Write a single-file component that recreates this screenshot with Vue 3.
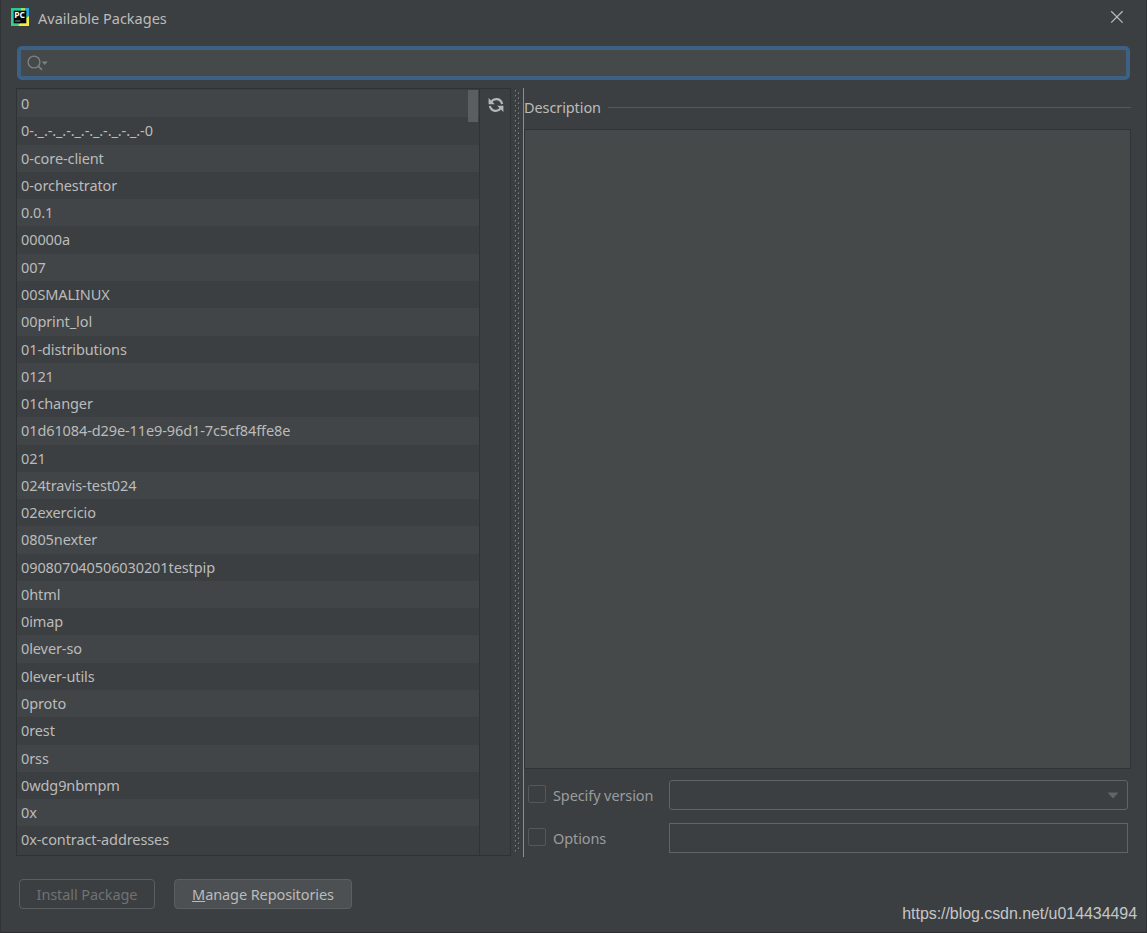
<template>
  <div class="dialog">
    <header class="title-bar">
      <svg class="app-icon" width="18" height="18" viewBox="0 0 18 18">
        <rect width="18" height="18" fill="#2bc98b" />
        <path d="M12 0h6v9l-4-3z" fill="#25a5df" />
        <path d="M10 0h4v4h-4z" fill="#a8dc5a" />
        <path d="M18 8v10H6l7-6z" fill="#f3ea43" />
        <path d="M0 9l8 9H0z" fill="#31d18c" />
        <rect x="2.7" y="2.7" width="12.6" height="12.6" fill="#05080a" />
        <text x="3.2" y="9.7" class="app-icon-text">PC</text>
        <rect x="4.2" y="12.5" width="5" height="1" fill="#898d8e" />
      </svg>
      <span class="title">Available Packages</span>
      <button class="close" title="Close">
        <svg width="14" height="14" viewBox="0 0 14 14">
          <path d="M1.2 1.2l11.4 11.4M12.6 1.2L1.2 12.6" stroke="#b9bcbe" stroke-width="1.25" fill="none" />
        </svg>
      </button>
    </header>

    <div class="search">
      <svg width="22" height="18" viewBox="0 0 22 18">
        <circle cx="7" cy="8" r="5.9" fill="none" stroke="#7d8184" stroke-width="1.4" />
        <path d="M11 12l4 3.8" stroke="#7d8184" stroke-width="1.7" />
        <path d="M14.7 7.4h6l-3 3.5z" fill="#7d8184" />
      </svg>
      <input v-model="query" type="text">
    </div>

    <main class="content">
      <section class="packages">
        <div class="list">
          <div
            v-for="(name, i) in filtered"
            :key="name"
            class="row"
            :class="{ striped: i % 2 === 0 }"
          >{{ name }}</div>
          <div class="scroll-thumb"></div>
        </div>
        <div class="side-tools">
          <svg width="16" height="16" viewBox="0 0 16 16">
            <g fill="none" stroke="#b4b8ba" stroke-width="2.2">
              <path d="M3.4 4.6C6 .9 12.6 1 14.2 7" />
              <path d="M12.6 11.4C10 15.1 3.4 15 1.8 9" />
            </g>
            <path d="M.6 1v6.2h6.2zM15.4 15V8.8H9.200z" fill="#b4b8ba" />
          </svg>
        </div>
      </section>

      <svg class="splitter" width="8" height="767">
        <defs>
          <pattern id="grip" width="6" height="5" patternUnits="userSpaceOnUse">
            <rect x="0" y="0" width="1" height="1.5" fill="#808385" />
            <rect x="1" y="1" width="1" height="1" fill="#2e3032" />
            <rect x="3" y="2.5" width="1" height="1.5" fill="#808385" />
            <rect x="4" y="4" width="1" height="1" fill="#2e3032" />
          </pattern>
        </defs>
        <rect width="6" height="762" fill="url(#grip)" />
      </svg>

      <section class="details">
        <div class="section-title">
          <span>Description</span>
          <i></i>
        </div>
        <div class="description"></div>
        <div class="option">
          <span class="checkbox"></span>
          <label>Specify version</label>
          <div class="field combo">
            <svg width="12" height="7" viewBox="0 0 12 7"><path d="M.5 .5h11L6 6.5z" fill="#616567" /></svg>
          </div>
        </div>
        <div class="option">
          <span class="checkbox"></span>
          <label>Options</label>
          <div class="field"></div>
        </div>
      </section>
    </main>

    <footer class="footer">
      <button class="btn install" disabled>Install Package</button>
      <button class="btn manage"><u>M</u>anage Repositories</button>
      <span class="watermark">https://blog.csdn.net/u014434494</span>
    </footer>
  </div>
</template>

<script setup>
import { computed, ref } from 'vue'

const query = ref('')

const packages = [
  '0',
  '0-._.-._.-._.-._.-._.-._.-0',
  '0-core-client',
  '0-orchestrator',
  '0.0.1',
  '00000a',
  '007',
  '00SMALINUX',
  '00print_lol',
  '01-distributions',
  '0121',
  '01changer',
  '01d61084-d29e-11e9-96d1-7c5cf84ffe8e',
  '021',
  '024travis-test024',
  '02exercicio',
  '0805nexter',
  '090807040506030201testpip',
  '0html',
  '0imap',
  '0lever-so',
  '0lever-utils',
  '0proto',
  '0rest',
  '0rss',
  '0wdg9nbmpm',
  '0x',
  '0x-contract-addresses'
]

const filtered = computed(() => packages.filter(name => name.includes(query.value)))
</script>

<style>
body {
  margin: 0;
  overflow: hidden;
}
</style>

<style scoped>
.dialog {
  box-sizing: border-box;
  width: 1147px;
  height: 933px;
  display: flex;
  flex-direction: column;
  background: #3c3f41;
  border-left: 1px solid #313436;
  border-right: 1px solid #303335;
  border-bottom: 1px solid #2c2d2f;
  color: #bbbbbb;
  font-family: "Noto Sans", "Open Sans", sans-serif;
  font-size: 14.5px;
  letter-spacing: -0.1px;
}

.title-bar {
  height: 46px;
  display: flex;
  align-items: flex-start;
  padding-left: 10px;
}

.app-icon {
  margin-top: 8px;
}

.app-icon-text {
  font: bold 8.5px "Open Sans", sans-serif;
  letter-spacing: -0.1px;
  fill: #fff;
}

.title {
  margin-left: 9px;
  line-height: 36px;
  letter-spacing: 0;
}

.close {
  margin: 10px 22px 0 auto;
  padding: 0;
  border: 0;
  background: none;
  height: 14px;
}

.close svg {
  display: block;
}

.search {
  box-sizing: border-box;
  height: 34px;
  margin: 0 16px;
  display: flex;
  align-items: center;
  padding-left: 6px;
  background: #45494a;
  border: 4px solid #3d6185;
  border-radius: 5px;
}

.search input {
  flex: 1;
  border: 0;
  outline: 0;
  background: none;
  color: inherit;
  font: inherit;
}

.content {
  height: 769px;
  margin: 8px 15px 0;
  display: flex;
}

.packages {
  box-sizing: border-box;
  width: 495px;
  height: 768px;
  display: flex;
  border: 1px solid #2f3234;
}

.list {
  position: relative;
  width: 462px;
  padding-top: 1.16px;
  overflow: hidden;
  border-right: 1px solid #303335;
}

.row {
  height: 27.28px;
  line-height: 27px;
  padding-left: 4px;
  white-space: pre;
}

.row.striped {
  background: #414547;
}

.scroll-thumb {
  position: absolute;
  top: 1px;
  right: 1px;
  width: 10px;
  height: 32px;
  background: #5b5e60;
}

.side-tools {
  flex: 1;
  display: flex;
  justify-content: center;
  padding: 8px 0 0 2px;
}

.splitter {
  margin: 2px 0 0 4px;
}

.details {
  flex: 1;
  display: flex;
  flex-direction: column;
  border-left: 1px solid #8a8c8e;
}

.section-title {
  display: flex;
  align-items: center;
  flex-shrink: 0;
  height: 41px;
  line-height: 39px;
}

.section-title span {
  height: 41px;
}

.section-title i {
  flex: 1;
  height: 1px;
  margin: 0 0 2px 7px;
  background: #55585a;
}

.description {
  box-sizing: border-box;
  flex-shrink: 0;
  height: 640px;
  margin-bottom: 11px;
  background: #45494a;
  border: 1px solid #313436;
}

.option {
  display: flex;
  align-items: center;
  flex-shrink: 0;
  height: 30px;
  margin-bottom: 13px;
  padding: 0 3px 0 4px;
  color: #999c9e;
}

.checkbox {
  box-sizing: border-box;
  width: 18px;
  height: 18px;
  margin-bottom: 2px;
  border: 1px solid #55585a;
  border-radius: 2px;
}

.option label {
  width: 116px;
  margin-left: 7px;
}

.field {
  box-sizing: border-box;
  flex: 1;
  height: 30px;
  border: 1px solid #616466;
}

.combo {
  display: flex;
  align-items: center;
  justify-content: flex-end;
  padding-right: 8px;
  border-radius: 3px;
}

.footer {
  display: flex;
  align-items: flex-start;
  padding: 22px 9px 0 18px;
}

.btn {
  box-sizing: border-box;
  height: 30px;
  padding: 0;
  border: 1px solid #5c5f61;
  border-radius: 4px;
  font: inherit;
  letter-spacing: inherit;
}

.install {
  width: 136px;
  background: #3c3f41;
  color: #6f7274;
}

.manage {
  width: 178px;
  margin-left: 19px;
  background: #4c5052;
  color: #bbbbbb;
}

.watermark {
  margin: 25px 0 0 auto;
  color: #c5c6c7;
  font: 16px/20px "Liberation Sans", Arial, sans-serif;
  letter-spacing: -0.06px;
}
</style>
